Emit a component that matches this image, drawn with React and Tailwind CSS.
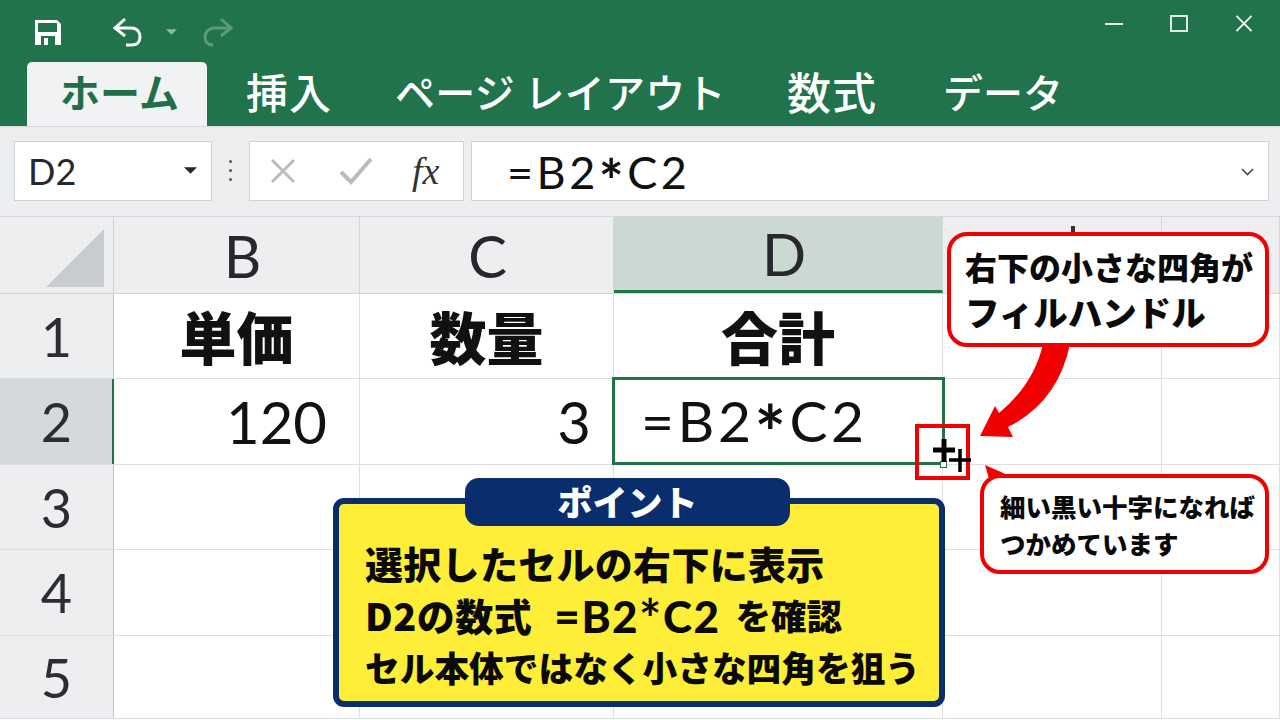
import React from 'react';

const jp = { fontFamily: '"Noto Sans CJK JP", sans-serif' };
const latin = { fontFamily: 'Lato, "Noto Sans CJK JP", sans-serif' };

const columns = [
  { label: 'B', width: 'w-[246px]', pad: 'pl-[12px]' },
  { label: 'C', width: 'w-[254px]', pad: 'pl-[2px]' },
  { label: 'D', width: 'w-[329px]', pad: 'pl-[12px]', active: true },
  { label: '', width: 'w-[219px]', pad: '' },
  { label: '', width: 'flex-1', pad: '' },
];

const rows = [
  { label: '1', height: 'h-[85px]', cells: ['単価', '数量', '合計'], header: true },
  { label: '2', height: 'h-[86px]', cells: ['120', '3', ''], active: true },
  { label: '3', height: 'h-[85px]', cells: [] },
  { label: '4', height: 'h-[86px]', cells: [] },
  { label: '5', height: 'h-[83px]', cells: [] },
];

// アスタリスクだけ大きく中央寄せ
const FormulaText = ({ className = '', star = 'text-[1.3em] translate-y-[0.24em]' }) => (
  <span className={`inline-flex items-baseline whitespace-pre ${className}`} style={latin}>
    =B2<span className={`font-bold leading-[0.5] ${star}`}>*</span>C2
  </span>
);

const SaveIcon = () => (
  <svg width="30" height="30" viewBox="0 0 30 30">
    <path d="M2 3H24L28 7V28H2Z" fill="#fff" />
    <rect x="5" y="6" width="19" height="9" fill="#21734b" />
    <rect x="8" y="19" width="14" height="9" fill="#21734b" />
    <rect x="11" y="21" width="4" height="7" fill="#fff" />
  </svg>
);

const UndoIcon = ({ color = '#fff' }) => (
  <svg width="34" height="32" viewBox="0 0 34 32" fill="none" stroke={color} strokeWidth="3">
    <path d="M13 3L3 12L13 20" />
    <path d="M4 12H19C25 12 28 16 28 21C28 26 25 29 20 29H14" />
  </svg>
);

const RedoIcon = () => (
  <svg width="34" height="32" viewBox="0 0 34 32" fill="none" stroke="#5b9a7c" strokeWidth="3">
    <path d="M21 3L31 12L21 20" />
    <path d="M30 12H15C9 12 5 16 5 21C5 26 8 29 13 29" />
  </svg>
);

const Caret = ({ color, size = 'w-[16px] h-[8px]' }) => (
  <svg className={size} viewBox="0 0 16 8">
    <path d="M0 0H16L8 8Z" fill={color} />
  </svg>
);

const TitleBar = () => (
  <div className="h-[62px] flex items-center pl-[33px] pt-[2px] relative">
    <SaveIcon />
    <div className="ml-[49px]"><UndoIcon /></div>
    <div className="ml-[20px]"><Caret color="#8fb8a4" size="w-[11px] h-[6px]" /></div>
    <div className="ml-[23px]"><RedoIcon /></div>
    <div className="absolute right-[27px] top-[15px] flex items-center gap-[47px]">
      <div className="w-[18px] h-[2px] bg-[#dfeae4]" />
      <div className="w-[18px] h-[17px] border-2 border-[#dfeae4]" />
      <svg width="18" height="17" viewBox="0 0 18 18" stroke="#eef4f0" strokeWidth="2">
        <path d="M1 1L17 17M17 1L1 17" />
      </svg>
    </div>
  </div>
);

const TabStrip = () => (
  <div className="h-[64px] flex items-end pl-[27px] text-white text-[40px] font-medium" style={jp}>
    <div className="w-[180px] h-[64px] pb-[6px] pl-[5px] bg-[#f1f2f3] rounded-t-[5px] text-[#1f7048] font-bold flex items-center justify-center leading-none">ホーム</div>
    <div className="h-[64px] pb-[6px] ml-[39px] flex items-center leading-none text-[42px] tracking-[1px]">挿入</div>
    <div className="h-[64px] pb-[6px] ml-[63px] flex items-center leading-none whitespace-pre tracking-[0.3px]">ページ レイアウト</div>
    <div className="h-[64px] pb-[6px] ml-[61px] flex items-center leading-none text-[44px] tracking-[1px]">数式</div>
    <div className="h-[64px] pb-[6px] ml-[66px] flex items-center leading-none">データ</div>
  </div>
);

const FormulaBar = () => (
  <div className="h-[91px] bg-[#eceef0] border-y border-[#d6d8db] flex items-center pl-[14px] pr-[11px] pb-[2px]">
    <div className="w-[198px] h-[60px] bg-white border border-[#cfd2d6] flex items-center pl-[13px] pr-[14px] text-[#26282b] text-[36px]" style={latin}>
      <span className="flex-1">D2</span>
      <Caret color="#26282b" size="w-[13px] h-[7px]" />
    </div>
    <div className="w-[37px] flex flex-col items-center gap-[6px]">
      <div className="w-[3px] h-[3px] rounded-full bg-[#555]" />
      <div className="w-[3px] h-[3px] rounded-full bg-[#555]" />
      <div className="w-[3px] h-[3px] rounded-full bg-[#555]" />
    </div>
    <div className="w-[215px] h-[60px] bg-white border border-[#cfd2d6] flex items-center pl-[19px]">
      <svg width="28" height="28" viewBox="0 0 28 28" stroke="#b9bcbf" strokeWidth="3">
        <path d="M3 3L25 25M25 3L3 25" />
      </svg>
      <svg className="ml-[42px]" width="34" height="28" viewBox="0 0 34 28" fill="none" stroke="#b9bcbf" strokeWidth="4">
        <path d="M2 15L12 25L32 2" />
      </svg>
      <span className="ml-[39px] text-[38px] italic text-[#333] leading-none" style={{ fontFamily: '"Liberation Serif", serif' }}>fx</span>
    </div>
    <div className="flex-1 h-[60px] ml-[7px] bg-white border border-[#cfd2d6] flex items-center pl-[35px] pr-[14px] pt-[3px] text-[45px] text-[#111]">
      <span className="flex-1"><FormulaText className="tracking-[3.5px]" /></span>
      <svg width="13" height="8" viewBox="0 0 13 8" fill="none" stroke="#444" strokeWidth="1.6">
        <path d="M1 1L6.5 6.5L12 1" />
      </svg>
    </div>
  </div>
);

const HeaderRow = () => (
  <div className="h-[77px] flex bg-[#eceef0] border-b border-[#d2d5d8]">
    <div className="w-[114px] shrink-0 border-r border-[#cdd0d4] flex items-end justify-end pr-[9px] pb-[6px]">
      <svg width="58" height="58" viewBox="0 0 58 58">
        <path d="M58 0V58H0Z" fill="#c9cccf" />
      </svg>
    </div>
    {columns.map((col, i) => (
      <div
        key={i}
        className={`${col.width} ${col.pad} flex items-center justify-center text-[58px] text-[#26282b] border-r border-[#d5d8db] ${col.active ? 'bg-[#cbd9d2] border-b-[3px] border-b-[#217346]' : ''}`}
        style={latin}
      >
        {col.label}
      </div>
    ))}
  </div>
);

const SheetRow = ({ row }) => (
  <div className={`${row.height} flex border-b border-[#dcdee1]`}>
    <div
      className={`relative w-[114px] shrink-0 flex items-center justify-center text-[54px] text-[#2b2d30] border-r border-[#bfc3c7] ${row.active ? 'bg-[#d6d9db]' : 'bg-[#eceef0]'}`}
      style={latin}
    >
      {row.label}
      {row.active && <div className="absolute right-[-1px] top-0 bottom-0 w-[2px] bg-[#217346]" />}
    </div>
    {columns.map((col, i) => {
      const value = row.cells[i];
      return (
        <div
          key={i}
          className={`${col.width} flex items-center border-r border-[#dcdee1] text-[#111] ${row.header ? 'justify-center font-black text-[57px]' : 'justify-end text-[58px]'} ${i === 0 && !row.header ? 'pr-[32px]' : ''} ${i === 1 && !row.header ? 'pr-[22px]' : ''}`}
          style={row.header ? jp : latin}
        >
          {value}
        </div>
      );
    })}
  </div>
);

const Overlays = () => (
  <>
    {/* 選択セル */}
    <div className="absolute left-[612px] top-[377px] w-[333px] h-[88px] border-[3px] border-[#217346] flex items-center pl-[26px] text-[57px] text-[#111] whitespace-nowrap">
      <FormulaText className="tracking-[3.5px]" />
    </div>
    <div className="absolute left-[940px] top-[461px] w-[7px] h-[7px] bg-white border border-[#217346]" />

    {/* 赤枠と十字カーソル */}
    <div className="absolute left-[915px] top-[424px] w-[55px] h-[56px] border-[4px] border-[#f00000]" />
    <svg className="absolute left-[930px] top-[436px]" width="45" height="40" viewBox="0 0 45 40" stroke="#000" fill="none">
      <path d="M14 3V26M3 14H25" strokeWidth="5" />
      <path d="M30 13V36M19 24H41" strokeWidth="3.5" />
    </svg>

    {/* 矢印 */}
    <svg className="absolute left-0 top-0 pointer-events-none" width="1280" height="720" viewBox="0 0 1280 720">
      <path d="M1043 344Q1034 384 999 413L995 406L980 436L1013 437L1008 427Q1058 402 1070 344Z" fill="#f00000" />
      <path d="M985 465L1010 476L990 482Z" fill="#f00000" />
    </svg>

    {/* 吹き出し */}
    <div className="absolute left-[947px] top-[232px] w-[322px] h-[115px] bg-white border-[4px] border-[#f00000] rounded-[20px] pl-[14px] pt-[8px] text-[32px] leading-[45px] font-black text-[#0a0a0a] whitespace-nowrap" style={jp}>
      <div>右下の小さな四角が</div>
      <div className="text-[34.5px]">フィルハンドル</div>
    </div>
    <div className="absolute left-[980px] top-[474px] w-[289px] h-[100px] bg-white border-[4px] border-[#f00000] rounded-[20px] pl-[16px] pt-[9px] text-[25.5px] leading-[37px] font-black text-[#0a0a0a] whitespace-nowrap" style={jp}>
      <div>細い黒い十字になれば</div>
      <div>つかめています</div>
    </div>

    {/* ポイント */}
    <div className="absolute left-[333px] top-[498px] w-[612px] h-[209px] bg-[#ffee38] border-[6px] border-[#0a2d6e] rounded-[11px] pl-[26px] pt-[33px] text-[38px] leading-[52.5px] font-black text-[#0a0a0a] whitespace-nowrap" style={jp}>
      <div className="h-[52px] tracking-[0.3px]">選択したセルの右下に表示</div>
      <div className="h-[52px] flex items-center">
        <span className="tracking-[0.5px]">D2の数式</span>
        <span className="ml-[22px] text-[44px] leading-none font-black">
          <FormulaText className="tracking-[1.5px]" star="text-[1.2em] translate-y-[0.12em]" />
        </span>
        <span className="ml-[15px] text-[35.5px]">を確認</span>
      </div>
      <div className="h-[52px] text-[34.7px]">セル本体ではなく小さな四角を狙う</div>
    </div>
    <div className="absolute left-[465px] top-[478px] w-[325px] h-[48px] pb-[4px] bg-[#0a2d6e] rounded-[14px] flex items-center justify-center text-white text-[35px] font-black leading-none" style={jp}>
      ポイント
    </div>

    {/* E列の見切れ */}
    <div className="absolute left-[1071px] top-[226px] w-[4px] h-[6px] bg-[#333]" />
  </>
);

export default function App() {
  return (
    <div className="relative w-[1280px] h-[720px] overflow-hidden bg-white">
      <div className="h-[126px] bg-[#21734b]">
        <TitleBar />
        <TabStrip />
      </div>
      <FormulaBar />
      <HeaderRow />
      {rows.map((row) => (
        <SheetRow key={row.label} row={row} />
      ))}
      <Overlays />
    </div>
  );
}
